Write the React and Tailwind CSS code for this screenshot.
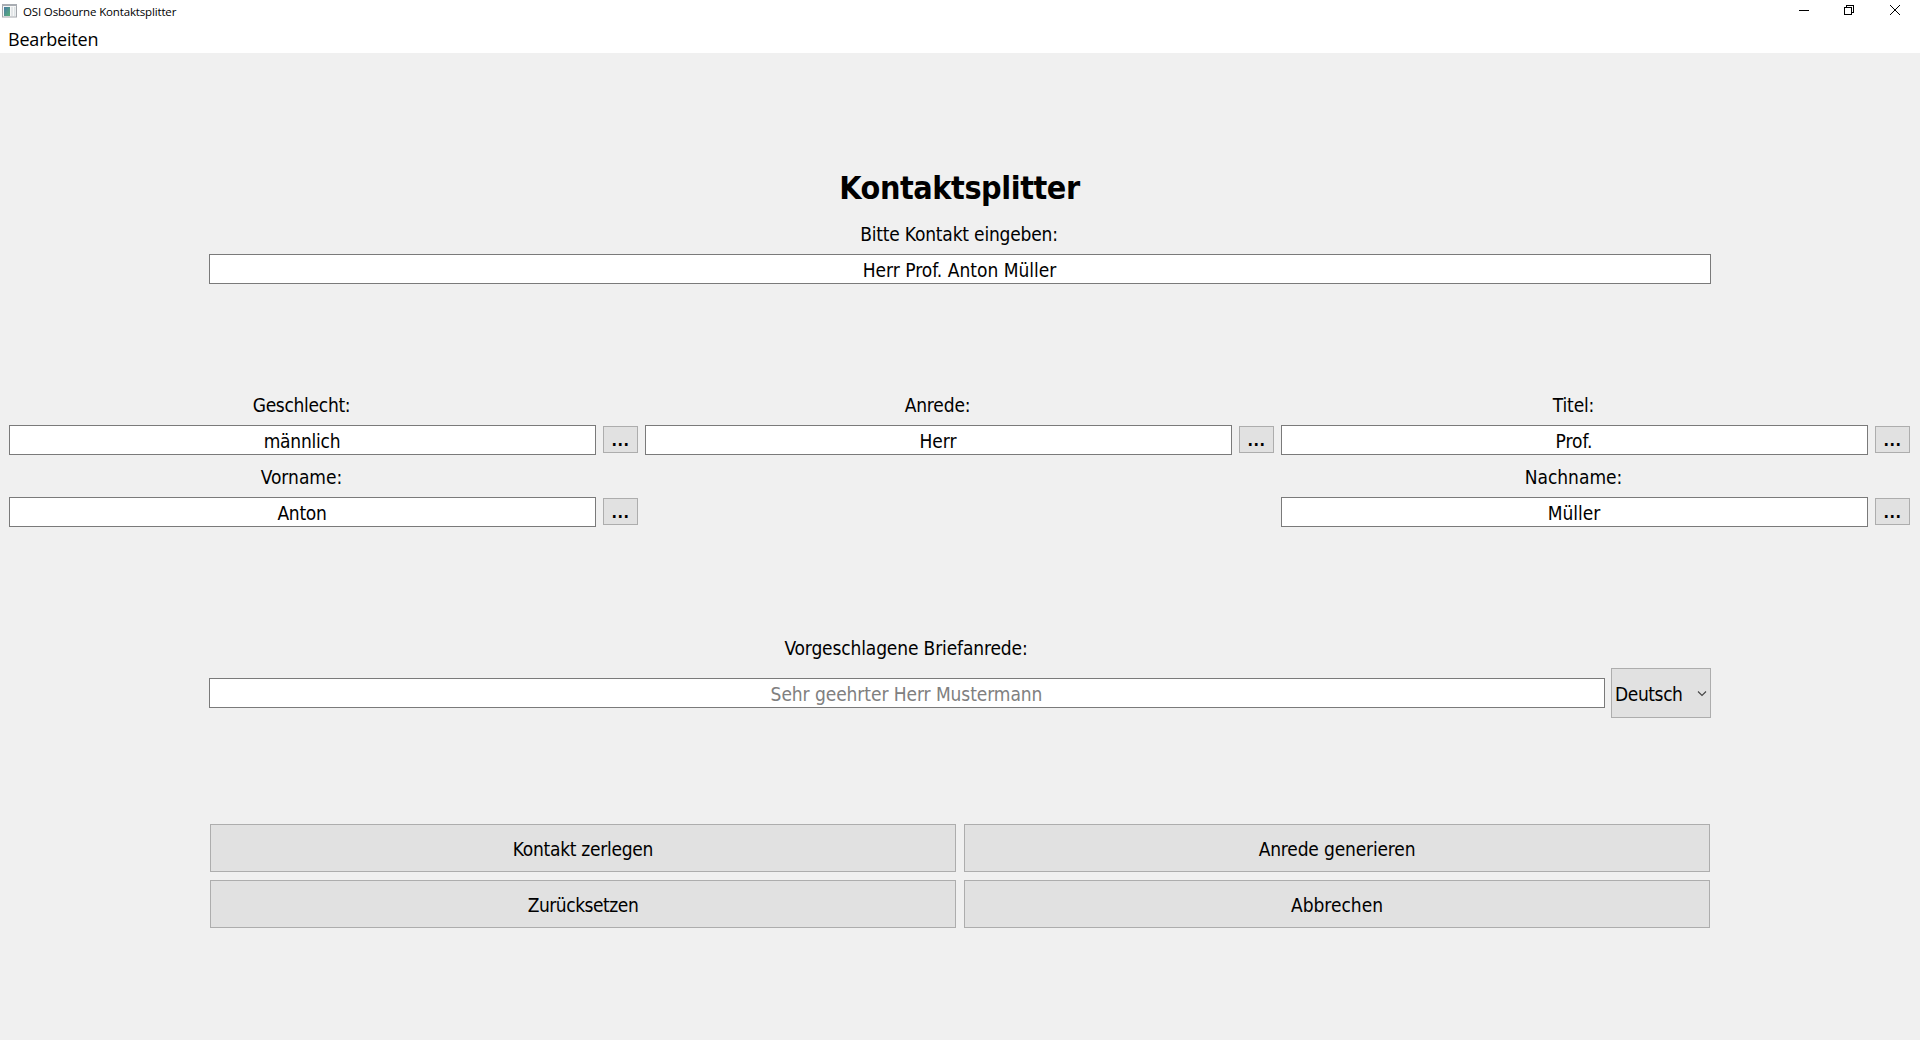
const SANS = "font-['DejaVu_Sans_Condensed','DejaVu_Sans',sans-serif]";

function Label({ children, className = "" }) {
  return (
    <div className={`h-[30px] pr-[2px] text-center text-[19px] leading-[30px] whitespace-nowrap ${className}`}>
      {children}
    </div>
  );
}

function Field({ children, className = "" }) {
  return (
    <div
      className={`h-[30px] border border-[#7a7a7a] bg-white pt-px pr-px text-center text-[19px] leading-[28px] whitespace-nowrap ${className}`}
    >
      {children}
    </div>
  );
}

function MoreButton() {
  return (
    <button className="h-[27px] w-[35px] shrink-0 border border-[#adadad] bg-[#e1e1e1] pt-[2px] text-center text-[16px] leading-[23px] font-bold tracking-[0.5px]">
      ...
    </button>
  );
}

function Entry({ label, value, labelClass, valueClass }) {
  return (
    <div className="flex flex-col gap-[5px]">
      <Label className={`mr-[42px] ${labelClass}`}>{label}</Label>
      <div className="flex gap-[7px]">
        <Field className={`flex-1 ${valueClass}`}>{value}</Field>
        <div className="flex pt-px">
          <MoreButton />
        </div>
      </div>
    </div>
  );
}

function ActionButton({ children, className = "" }) {
  return (
    <button className={`h-12 border border-[#adadad] bg-[#e1e1e1] pt-[2px] text-[19px] leading-[28px] ${className}`}>
      {children}
    </button>
  );
}

function TitleBar() {
  return (
    <header className="flex h-[53px] flex-col bg-white font-['Open_Sans',sans-serif]">
      <div className="flex h-[22px] items-start justify-between">
        <div className="flex items-start pl-[2px]">
          <svg className="mt-1" width="15" height="14" viewBox="0 0 15 14">
            <defs>
              <linearGradient id="pane" x1="0" y1="0" x2="1" y2="1">
                <stop offset="0" stopColor="#4a7ba6" />
                <stop offset="1" stopColor="#57b077" />
              </linearGradient>
            </defs>
            <rect x="0.5" y="0.5" width="14" height="12.5" fill="#f7f7f7" stroke="#a3a6ab" />
            <rect x="0" y="0" width="15" height="2" fill="#a9adb3" />
            <rect x="2" y="3" width="6" height="9" fill="url(#pane)" />
            <rect x="9" y="3" width="2" height="9" fill="#e3e6e8" />
            <rect x="12" y="3" width="1.5" height="9" fill="#dde3e6" />
          </svg>
          <span className="ml-[6px] text-[11.5px] leading-[23px] tracking-[-0.15px]">OSI Osbourne Kontaktsplitter</span>
        </div>
        <div className="flex gap-[35px] pt-[5px] pr-5">
          <svg width="10" height="10" viewBox="0 0 10 10" shapeRendering="crispEdges">
            <rect y="5" width="10" height="1" />
          </svg>
          <svg width="10" height="10" viewBox="0 0 10 10" fill="none" stroke="#000" shapeRendering="crispEdges">
            <path d="M0.5 2.5h7v7h-7z" />
            <path d="M2.5 2.5v-2h7v7h-2" />
          </svg>
          <svg className="ml-px" width="10" height="10" viewBox="0 0 10 10" stroke="#000">
            <path d="M0 0l10 10M10 0L0 10" />
          </svg>
        </div>
      </div>
      <nav className="pl-2 text-[18px] leading-[34px] tracking-[-0.2px]">Bearbeiten</nav>
    </header>
  );
}

export default function App() {
  return (
    <div className={`flex h-[1040px] w-[1920px] flex-col overflow-hidden bg-[#f0f0f0] text-black ${SANS}`}>
      <TitleBar />
      <main className="flex flex-col">
        <section className="mt-[115px] ml-[209px] flex w-[1502px] flex-col">
          <h1 className="h-10 pr-px text-center text-[32px] leading-[40px] font-bold tracking-[-0.43px]">Kontaktsplitter</h1>
          <Label className="mt-[11px] tracking-[-0.19px]">Bitte Kontakt eingeben:</Label>
          <Field className="mt-[5px]">Herr Prof. Anton Müller</Field>
        </section>

        <section className="mt-[106px] ml-[9px] grid w-[1901px] grid-cols-3 gap-x-[7px] gap-y-[7px]">
          <Entry label="Geschlecht:" value="männlich" labelClass="tracking-[-0.3px]" valueClass="tracking-[-0.24px]" />
          <Entry label="Anrede:" value="Herr" labelClass="tracking-[-0.15px]" valueClass="" />
          <Entry label="Titel:" value="Prof." labelClass="tracking-[-0.15px]" valueClass="" />
          <Entry label="Vorname:" value="Anton" labelClass="" valueClass="tracking-[-0.3px]" />
          <div />
          <Entry label="Nachname:" value="Müller" labelClass="" valueClass="" />
        </section>

        <section className="mt-[106px] ml-[209px] flex w-[1502px] flex-col">
          <Label className="mr-[106px] tracking-[-0.14px]">Vorgeschlagene Briefanrede:</Label>
          <div className="mt-[5px] flex h-[50px] items-center gap-[6px]">
            <Field className="flex-1 tracking-[-0.07px] text-[#808080]">Sehr geehrter Herr Mustermann</Field>
            <button className="flex h-[50px] w-[100px] items-center justify-between border border-[#adadad] bg-[#e1e1e1] pr-[3px] pl-[3px] text-[19px] tracking-[-0.4px]">
              <span className="pt-[2px] leading-[28px]">Deutsch</span>
              <svg width="10" height="7" viewBox="0 0 10 7" fill="none" stroke="#444" strokeWidth="1.1">
                <path d="M1 1.5l4 4 4-4" />
              </svg>
            </button>
          </div>
        </section>

        <section className="mt-[106px] ml-[210px] grid w-[1500px] grid-cols-2 gap-2">
          <ActionButton className="tracking-[-0.28px]">Kontakt zerlegen</ActionButton>
          <ActionButton className="tracking-[-0.16px]">Anrede generieren</ActionButton>
          <ActionButton className="tracking-[-0.46px]">Zurücksetzen</ActionButton>
          <ActionButton>Abbrechen</ActionButton>
        </section>
      </main>
    </div>
  );
}
